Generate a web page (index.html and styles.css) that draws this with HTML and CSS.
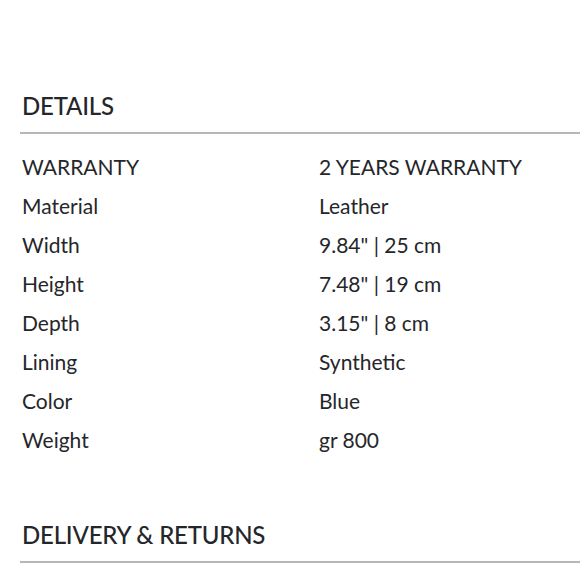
FILE: index.html
```html
<!DOCTYPE html>
<html>
<head>
<meta charset="utf-8">
<link rel="stylesheet" href="styles.css">
</head>
<body>
<div class="page">
  <section class="section">
    <h2 class="title">DETAILS</h2>
    <div class="rule"></div>
    <div class="specs">
      <div class="row"><span class="label">WARRANTY</span><span class="value">2 YEARS WARRANTY</span></div>
      <div class="row"><span class="label">Material</span><span class="value">Leather</span></div>
      <div class="row"><span class="label">Width</span><span class="value">9.84" | 25 cm</span></div>
      <div class="row"><span class="label">Height</span><span class="value">7.48" | 19 cm</span></div>
      <div class="row"><span class="label">Depth</span><span class="value">3.15" | 8 cm</span></div>
      <div class="row"><span class="label">Lining</span><span class="value">Synthetic</span></div>
      <div class="row"><span class="label">Color</span><span class="value">Blue</span></div>
      <div class="row"><span class="label">Weight</span><span class="value">gr 800</span></div>
    </div>
  </section>
  <section class="section">
    <h2 class="title">DELIVERY &amp; RETURNS</h2>
    <div class="rule"></div>
  </section>
</div>
</body>
</html>
```
FILE: styles.css
```css
html, body {
  margin: 0;
  padding: 0;
  background: #ffffff;
}
.page {
  padding: 90px 0 0 20px;
  font-family: "Lato", "Noto Sans", sans-serif;
  color: #25262a;
}
.section {
  margin: 0;
}
.title {
  margin: 0 0 0 2px;
  font-size: 24px;
  font-weight: 500;
  line-height: 32px;
  letter-spacing: -0.2px;
}
.rule {
  height: 2px;
  background: #b3b6ba;
  margin-top: 10px;
}
.specs {
  padding: 13px 0 60px 2px;
}
.row {
  display: grid;
  grid-template-columns: 297px 1fr;
  height: 39px;
  align-items: center;
  font-size: 21px;
}
```
